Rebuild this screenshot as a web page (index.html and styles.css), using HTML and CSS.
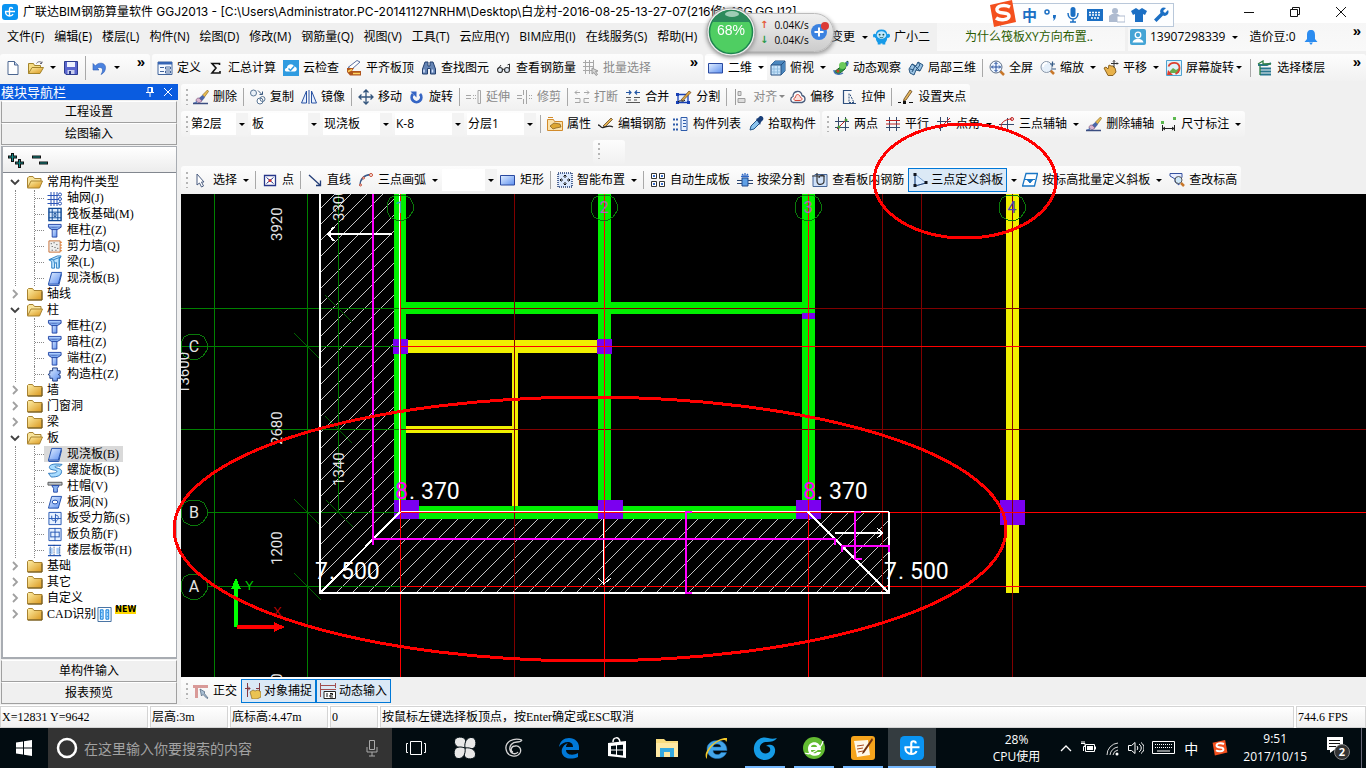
FILE: index.html
```html
<!DOCTYPE html>
<html lang="zh-CN">
<head>
<meta charset="utf-8">
<title>广联达BIM钢筋算量软件 GGJ2013</title>
<link rel="stylesheet" href="styles.css">
</head>
<body>
<svg class="defs" aria-hidden="true">
<defs>
<linearGradient id="gBlue" x1="0" y1="0" x2="1" y2="1"><stop offset="0" stop-color="#e4f0ff"/><stop offset="1" stop-color="#5c8ff0"/></linearGradient>
<linearGradient id="gFold" x1="0" y1="0" x2="1" y2="1"><stop offset="0" stop-color="#fff0a8"/><stop offset="1" stop-color="#d9961c"/></linearGradient>
<pattern id="hatch" width="16" height="16" patternUnits="userSpaceOnUse" patternTransform="translate(1 0)"><path d="M-1 17L17-1" stroke="#c4c4c4" fill="none"/></pattern>
</defs>
<symbol id="logo" viewBox="0 0 16 16"><rect width="16" height="16" rx="3" fill="#0a94f2"/><path d="M10.500 5C10.500 3 7.500 3 7.500 5v7M3 7.500h10M3.500 7.500c0 3 2 4.500 4 4.500 1.500 0 3-.5 3.500-2" fill="none" stroke="#fff" stroke-width="1.400"/></symbol>
<symbol id="new" viewBox="0 0 16 16"><path d="M3 1.500h6.500l3.500 3.500v9.500H3z" fill="#fff" stroke="#4c6690"/><path d="M9.500 1.500V5H13" fill="#c7d7ef" stroke="#4c6690"/></symbol>
<symbol id="open" viewBox="0 0 16 16"><path d="M.5 13.500v-10h5l1 2h6v2.500" fill="#f6dc83" stroke="#a4842b"/><path d="M.5 13.500L4 7.500h11.500l-3.500 6z" fill="url(#gFold)" stroke="#a4842b"/><path d="M8.500 3.500c1-2 4-2.500 5.500-.5V1.500M14 3.500h-2" fill="none" stroke="#667"/></symbol>
<symbol id="save" viewBox="0 0 16 16"><path d="M1.500 1.500h13v13H3l-1.500-1.500z" fill="#5a66cf" stroke="#2d3c8f"/><path d="M4 2h8v5H4z" fill="#eef2ff"/><path d="M4.500 10h7v4h-7z" fill="#c9cfee"/><path d="M6 11h2v3H6z" fill="#2d3c8f"/></symbol>
<symbol id="undo" viewBox="0 0 16 16"><path d="M3.500 6c2-4 10-4 10 1.500 0 3.500-2 6-4.500 7 2-3 2.500-7-1-7-1.500 0-2 .5-2.500 1L7 10H1V3.500z" fill="#4a82e0" stroke="#2c5ab4" stroke-width=".6"/></symbol>
<symbol id="define" viewBox="0 0 16 16"><path d="M1 2h14v12.500H1z" fill="#f5f9ff" stroke="#41649c"/><path d="M1 2h14v2.500H1z" fill="#3564b4"/><path d="M3 7.500h4M3 11.500h4M8.500 7h5v2h-5zM8.500 11h5v2h-5z" stroke="#41649c" fill="#fff"/></symbol>
<symbol id="sigma" viewBox="0 0 16 16"><path d="M11.500 5V3.500H4l4 4.500-4 5h8V11" fill="none" stroke="#111" stroke-width="1.600"/></symbol>
<symbol id="cloud" viewBox="0 0 16 16"><rect width="16" height="16" fill="#2f9be0"/><path d="M3 11.500c-2-1-1-3.500 1-3.500 0-4 6-5 7-1.500 3 0 4 4 1 5z" fill="#fff"/><path d="M5.500 8.500l2 2 3.500-4" stroke="#2f9be0" fill="none" stroke-width="1.500"/></symbol>
<symbol id="flat" viewBox="0 0 16 16"><path d="M2 7.500L11 .5l3 1.500-8 7z" fill="#fff" stroke="#5a6fa0"/><path d="M1 8h7l-2 3h9v4.500H4L1 12z" fill="#b0551d"/><path d="M2 11.500l4-2M7 13.500h7" stroke="#ffd35e" stroke-width="1.500"/></symbol>
<symbol id="bino" viewBox="0 0 16 16"><path d="M4 2h3v4h2V2h3l2.500 7v5h-5V8.500h-3V14h-5V9z" fill="#6584b4" stroke="#24406f"/><path d="M3 9.500v3M11.500 9.500v3" stroke="#d6e4ff" stroke-width="1.500"/></symbol>
<symbol id="glasses" viewBox="0 0 16 16"><circle cx="4" cy="10" r="2.500" fill="#dce6f2" stroke="#333" stroke-width="1.200"/><circle cx="11" cy="10" r="2.500" fill="#dce6f2" stroke="#333" stroke-width="1.200"/><path d="M6.500 10c.5-1 1.500-1 2 0M2 9l3-4M13.500 9V4l-2 1" stroke="#333" fill="none"/></symbol>
<symbol id="batch" viewBox="0 0 16 16"><path d="M0 2.500h11M0 6.500h11M0 10.500h9M2.500 0v14M6.500 0v14M10.500 0v9" stroke="#a8a8a8"/><path d="M9 8l6 3-2.500.5 2 3-1.500 1-2-3-2 1.500z" fill="#d5d5d5" stroke="#999"/></symbol>
<symbol id="rect" viewBox="0 0 16 16"><path d="M.5 3.500h14v9.500H.5z" fill="url(#gBlue)" stroke="#2949a0"/></symbol>
<symbol id="cube" viewBox="0 0 16 16"><path d="M1 5l4-4h10v10l-4 4H1z" fill="#c8e4fb" stroke="#254f80"/><path d="M1 5l4-4h10l-4 4zM11 5l4-4v10l-4 4z" fill="#4a86bd"/><path d="M1 5h10v10M11 5l4-4" fill="none" stroke="#254f80"/><path d="M4 6v8M7.500 6v8M2 9h8M2 12h8" stroke="#92bddf"/></symbol>
<symbol id="orbit" viewBox="0 0 16 16"><path d="M1 12L10 5l5-4-3 8-6 5z" fill="#2f9c40" stroke="#195e2a"/><path d="M1 10c0 5 6 5 9 3M13 2l2 1-1 3" fill="none" stroke="#4776b6" stroke-width="1.500"/><circle cx="9.500" cy="5.500" r="3.500" fill="#6cca5c"/><circle cx="5" cy="11" r="1.500" fill="#d23c28"/></symbol>
<symbol id="part3d" viewBox="0 0 16 16"><path d="M1 9l3-5 4 2 2-4 5 3-3 6-4-1-2 5-4-2z" fill="#9cc4e4" stroke="#285680"/><path d="M4 4l3 2-3 6M10 2l2 3-4 5M7 6l5 5M2 9l4 1" fill="none" stroke="#285680"/></symbol>
<symbol id="full" viewBox="0 0 16 16"><path d="M11 11l4 4" stroke="#c8772a" stroke-width="2.500"/><circle cx="7" cy="7" r="6" fill="#edf5ff" stroke="#5f7088"/><path d="M7 2.500v9M2.500 7h9M5.500 4L7 2.500 8.500 4M5.500 10L7 11.500 8.500 10M4 5.500L2.500 7 4 8.500M10 5.500L11.500 7 10 8.500" fill="none" stroke="#244f9e"/></symbol>
<symbol id="zoom" viewBox="0 0 16 16"><path d="M10 10l4 4" stroke="#c8772a" stroke-width="2.500"/><circle cx="6.500" cy="7" r="5.500" fill="#e6f0fa" stroke="#8a97a8"/><path d="M3 7a4 4 0 0 1 4-4" stroke="#fff" fill="none" stroke-width="2"/><path d="M10 4h5M12.500 1.500v5M12 9h4" stroke="#355b87" stroke-width="1.200"/></symbol>
<symbol id="pan" viewBox="0 0 16 16"><path d="M1 8l2-1 2 2 1-4 2 1 2 0 2 2 1 4-3 3.500H5z" fill="#e8b24b" stroke="#8c6422"/><path d="M11 .5v7M8 3.500h7M10 1.500l1-1 1 1M14 2.500l1 1-1 1" stroke="#333" fill="none"/></symbol>
<symbol id="rotscr" viewBox="0 0 16 16"><path d="M.5.5h15v15H.5z" fill="#def2fb" stroke="#4ea2d0"/><path d="M4 11l3-3 3 2 3-2v5H4z" fill="#69ad4c"/><path d="M2.500 6.500c2-5 11-5 11 1.500 0 3-2 5-4 6" fill="none" stroke="#dd402f" stroke-width="1.800"/><path d="M1 15h6L2 10z" fill="#dd402f"/></symbol>
<symbol id="floor" viewBox="0 0 16 16"><path d="M1 5h9l4-2M3 8.500h11M3 11.500h11M3 14.500h11" stroke="#28768f" stroke-width="1.800"/><path d="M1 4l5-3v3h8M3 5v10" stroke="#2d7f43" fill="none" stroke-width="1.300"/></symbol>
<symbol id="erase" viewBox="0 0 16 16"><path d="M14.500 1l-5 5 2 2 4-5.500z" fill="#e9bd50" stroke="#7a5b18" stroke-width=".6"/><path d="M9.500 6L6 9l3 3 3-3.500z" fill="#4b66a8"/><path d="M6 9c-2 0-3 1-3 3l3 2 3-2z" fill="#d7b4cf" stroke="#71446f" stroke-width=".6"/><path d="M0 14.500h15" stroke="#3a4d80" stroke-width="1.500"/><path d="M0 14l4-2v2z" fill="#5b79b5"/></symbol>
<symbol id="copy" viewBox="0 0 16 16"><circle cx="3.500" cy="4" r="3" fill="#eaf1f8" stroke="#5b7796"/><circle cx="10" cy="12" r="3" fill="#fff" stroke="#5b7796"/><circle cx="12.500" cy="10" r="2.500" fill="none" stroke="#5b7796"/><path d="M8 1.500l4 4M12.500 2.500v3H9.500" stroke="#3b5a80" fill="none"/></symbol>
<symbol id="mirror" viewBox="0 0 16 16"><path d="M5.500 2v12H.5zM10.500 2v12h5z" fill="#e6efff" stroke="#2a53a2"/><path d="M8 1v14" stroke="#2a53a2"/></symbol>
<symbol id="move" viewBox="0 0 16 16"><path d="M8 1v14M1 8h14M5.500 3.500L8 1l2.500 2.500M5.500 12.500L8 15l2.500-2.500M3.500 5.500L1 8l2.500 2.500M12.500 5.500L15 8l-2.500 2.500" stroke="#34557c" fill="none" stroke-width="1.300"/></symbol>
<symbol id="rotate" viewBox="0 0 16 16"><path d="M4 5a4.800 4.800 0 1 0 7 0" fill="none" stroke="#3565c4" stroke-width="2.800"/><path d="M1.500 2.500h6v6z" fill="#3565c4"/></symbol>
<symbol id="extend" viewBox="0 0 16 16"><path d="M0 6.500h5M0 9.500h5M7 6.500h1M9 6.500h1M7 9.500h1M9 9.500h1M12 1.500h2.500v13H12z" stroke="#a6a6a6" fill="none"/></symbol>
<symbol id="trim" viewBox="0 0 16 16"><path d="M0 6.500h5M0 9.500h5M12 6.500h1M14 6.500h1M12 9.500h1M14 9.500h1M6.500 1v5M9.500 1v14M6.500 10v5" stroke="#a6a6a6" fill="none"/></symbol>
<symbol id="break" viewBox="0 0 16 16"><path d="M1 3.500h5M3 1.500l-2 2 2 2M10 3.500h5M13 1.500l2 2-2 2M1 9.500h5v4H1M15 9.500h-5v4h5" stroke="#a6a6a6" fill="none"/></symbol>
<symbol id="merge" viewBox="0 0 16 16"><path d="M1 3.500h5M4 1.500l2 2-2 2M10 3.500h5M12 1.500l-2 2 2 2" stroke="#2558a5" stroke-width="1.200" fill="none"/><path d="M1 8.500h5M9 8.500h6M1 13.500h14M3 11h3M9 11h3" stroke="#555"/></symbol>
<symbol id="split" viewBox="0 0 16 16"><path d="M2 5.500h10v8H2z" fill="#e7f1ff" stroke="#1740b5" stroke-width="1.300"/><path d="M0 4h3v3H0zM0 12h3v3H0zM11 12h3v3h-3z" fill="#1740b5"/><path d="M5 11l8-9 2 1.500L7 11.500z" fill="#dfa843" stroke="#643f16" stroke-width=".7"/><path d="M2 13c3-3 4 1 7-2" stroke="#111" fill="none"/></symbol>
<symbol id="align" viewBox="0 0 16 16"><path d="M2.500 0v16M5 2.500h3v4H5zM5 9.500h7v4H5z" fill="#ddd" stroke="#9c9c9c"/></symbol>
<symbol id="offset" viewBox="0 0 16 16"><path d="M3 13.500c-3-1-3-5 0-6 0-6 8-7 9-1 4 1 4 6 0 7z" fill="#fff" stroke="#4c5e7e" stroke-width="1.300"/><path d="M5 11.500c-2-1-1-3 .5-3 0-4 4-4 5 0 2 0 2 3 0 3z" fill="#fbe0dc" stroke="#d34b3d"/></symbol>
<symbol id="stretch" viewBox="0 0 16 16"><path d="M10 2V1.500H2.500v13H15" fill="none" stroke="#2f507e" stroke-width="1.200"/><path d="M8 4.500v9l5 0-4-8" stroke="#2f507e" stroke-dasharray="2 1" fill="none"/></symbol>
<symbol id="gripset" viewBox="0 0 16 16"><path d="M6 10l6-9 2 1.500L8 11l-2.500 1z" fill="#e5b75e" stroke="#60401a" stroke-width=".8"/><path d="M0 13.500h3M11 13.500h4" stroke="#111"/><path d="M5 12h3v3H5z" fill="#111"/></symbol>
<symbol id="prop" viewBox="0 0 16 16"><path d="M.5 3.500h6l1 2h8v9H.5z" fill="#fbe3ad" stroke="#d28b2b"/><path d="M1 1.500h5" stroke="#d28b2b"/><path d="M3 10l4-3 6 1 1 3-5 1-3 1z" fill="#dda733" stroke="#7d571a" stroke-width=".7"/></symbol>
<symbol id="editbar" viewBox="0 0 16 16"><path d="M5 10l8-8 1.500 1.500L7 11z" fill="#e3b150" stroke="#503515" stroke-width=".7"/><path d="M0 9c3 0 2 3 5 2.500 5-1 6-2.500 10-.5" stroke="#222" fill="none" stroke-width="1.300"/></symbol>
<symbol id="list" viewBox="0 0 16 16"><path d="M0 3.500h6M0 8.500h6M0 13.500h6" stroke="#2d5baa" stroke-width="2" stroke-dasharray="2 1"/><path d="M8 1.500h6v13H8z" fill="#eaf2ff" stroke="#2d5baa"/><path d="M10 4.500h3M10 7.500h3M10 10.500h3" stroke="#2d5baa"/></symbol>
<symbol id="pick" viewBox="0 0 16 16"><path d="M2 14l1-4 6-6 3 3-6 6z" fill="#8cc4ee" stroke="#205285"/><path d="M8 3l2-1 2-2c3 0 4 2 3 4l-2 2-1 3z" fill="#193f79"/></symbol>
<symbol id="axis2" viewBox="0 0 16 16"><path d="M1 5.500h14M1 11.500h14M4.500 1v14M11.500 1v14" stroke="#34496b"/><path d="M3 13L13 3" stroke="#c02222"/><circle cx="5" cy="11" r="1.500" fill="#4a9a35"/><circle cx="12" cy="4" r="1.500" fill="#4a9a35"/></symbol>
<symbol id="axisp" viewBox="0 0 16 16"><path d="M4.500 1v14M11.500 1v14M1 11.500h14" stroke="#34496b"/><path d="M1 4.500h14M1 8h14" stroke="#c02222"/></symbol>
<symbol id="axisa" viewBox="0 0 16 16"><path d="M1 5.500h14M1 11.500h6M4.500 1v14M11.500 1v6" stroke="#34496b"/><path d="M3 13L14 2" stroke="#c02222"/></symbol>
<symbol id="axis3" viewBox="0 0 16 16"><path d="M0 8.500h15M8.500 2v13" stroke="#34496b"/><path d="M3 13c-3-6 3-10 10-10" fill="none" stroke="#c02222"/><circle cx="13" cy="3" r="1.500" fill="none" stroke="#c02222"/></symbol>
<symbol id="dim" viewBox="0 0 16 16"><path d="M1.500 9v6M13.500 9v6M2 12.500h11M4 11l-2 1.500L4 14M11 11l2 1.500L11 14" stroke="#222" fill="none"/><path d="M0 5h3v3H0zM12 1h3v3h-3z" fill="#5bb84e"/></symbol>
<symbol id="cursor" viewBox="0 0 16 16"><path d="M4 2v11l2.500-2 2 4 2-1-2-4H11z" fill="#fff" stroke="#4b5d80"/></symbol>
<symbol id="point" viewBox="0 0 16 16"><path d="M2.500 3.500h11v10h-11z" fill="#fff" stroke="#26368a" stroke-width="1.300"/><path d="M4.500 5.500l7 6M11.500 5.500l-7 6" stroke="#26368a"/><circle cx="8" cy="8.500" r="1.500" fill="#d23030"/></symbol>
<symbol id="line" viewBox="0 0 16 16"><path d="M2 3l11 10M13.500 8.500V13.500H9" stroke="#243e78" stroke-width="1.300" fill="none"/></symbol>
<symbol id="arc" viewBox="0 0 16 16"><path d="M2 14C2 8 5 3 13 2.500" stroke="#3c5c8c" stroke-width="1.300" fill="none"/><g fill="#fff" stroke="#c8492f"><circle cx="2.500" cy="13" r="1"/><circle cx="5.500" cy="6" r="1"/><circle cx="13" cy="3" r="1.500"/></g></symbol>
<symbol id="smart" viewBox="0 0 16 16"><path d="M1 1h14v14H1z" fill="#dceaff" stroke="#203b71" stroke-width="1.500" stroke-dasharray="1 1"/><path d="M8 3v3M8 10v3M3 8h3M10 8h3M6.500 4.500L8 3l1.500 1.500M6.500 11.500L8 13l1.500-1.500M4.500 6.500L3 8l1.500 1.500M11.500 6.500L13 8l-1.500 1.500" stroke="#111" fill="none"/></symbol>
<symbol id="auto" viewBox="0 0 16 16"><path d="M1.500 1.500h5v5h-5zM9.500 1.500h5v5h-5zM1.500 9.500h5v5h-5zM9.500 9.500h5v5h-5z" fill="#fff" stroke="#333"/><path d="M3 3h2v2H3zM11 3h2v2h-2zM3 11h2v2H3zM11 11h2v2h-2z" fill="#3870d0"/></symbol>
<symbol id="beamcut" viewBox="0 0 16 16"><path d="M0 8.500h16M0 11.500h16" stroke="#29446f"/><path d="M5 6h6v8H5z" fill="#5fa0e6" stroke="#234b8c"/><path d="M8 1v3M5 2l1.500 1.500M11 2L9.500 3.500M4 4.500h8" stroke="#3169c5" stroke-width="1.300"/></symbol>
<symbol id="viewbar" viewBox="0 0 16 16"><path d="M3 2.500h12v12H1V4.500z" fill="#cfe1f8" stroke="#456597"/><path d="M0 4h13M5 1v8c0 5 7 4 7 0V5c0-3-5-2-5 1" fill="none" stroke="#333" stroke-width="1.200"/></symbol>
<symbol id="slope" viewBox="0 0 16 16"><path d="M3 2v12l11-3z" fill="#d6eaff" stroke="#7fa3cf"/><path d="M3 3v10M3 14l11-3" stroke="#27487b"/><path d="M1.500 1h3v3h-3zM1.500 12h3v3h-3zM12.500 9h3v3h-3z" fill="#10151f"/></symbol>
<symbol id="level" viewBox="0 0 16 16"><path d="M4 1.500h11.500l-3 12.500H.5z" fill="#fff" stroke="#1976c5" stroke-width="1.300"/><path d="M3 7.500h10M5.500 8h5L8 11z" fill="#1976c5" stroke="#1976c5"/></symbol>
<symbol id="check" viewBox="0 0 16 16"><path d="M1 1.500h12v4L10 8v5l-4-3V7L1 4z" fill="#e7edff" stroke="#3551a0"/><circle cx="9.500" cy="8" r="3.500" fill="#cfe8fa" stroke="#555"/><path d="M12 11l3 3" stroke="#c8772a" stroke-width="2.500"/></symbol>
<symbol id="ortho" viewBox="0 0 16 16"><path d="M0 2h15v3H5v10H2V5H0z" fill="#d99a98"/><path d="M7 6l5 3-1 1 4 5-1 .5-4-4-1.500 1.500z" fill="#a9bed2" stroke="#4a6078" stroke-width=".7"/></symbol>
<symbol id="snap" viewBox="0 0 16 16"><path d="M2.500 0v14M14.500 0v9M0 5.500h5M3 3.500l2 2-2 2M11 5.500h4" stroke="#843a42" fill="none"/><path d="M5 9l3-2 2 1 3-1 3 2v5l-4 2H7z" fill="#eac353" stroke="#8b6627" stroke-width=".7"/></symbol>
<symbol id="dyn" viewBox="0 0 16 16"><path d="M.5 0v14M15.500 0v5M1 2.500h14M3 6.500h13M1 6.500h2" stroke="#a14e4e"/><path d="M4 8.500h11.500v7H4z" fill="#fff" stroke="#222"/><path d="M7 10v4M10 10.500h2.500v1.500H10v2h3" fill="none" stroke="#111"/></symbol>
<symbol id="fopen" viewBox="0 0 16 14"><path d="M.5 12V2.500L2 1h4l1.500 2H14v3" fill="#f8e49b" stroke="#a88331"/><path d="M.5 12.500L4 5.500h11.500L12.500 12.500z" fill="url(#gFold)" stroke="#a88331"/></symbol>
<symbol id="fold" viewBox="0 0 16 14"><path d="M.5 12.500V2L1.500 1h4L7 3h8v9.500z" fill="url(#gFold)" stroke="#a88331"/><path d="M15 4v8.500H1" stroke="#6b5520" fill="none"/></symbol>
<symbol id="gridt" viewBox="0 0 15 15"><path d="M0 4.500h11M0 8.500h11M0 12.500h11M3.500 1v14M6.500 1v14M9.500 1v14" stroke="#2a54b6"/><g fill="#fff" stroke="#2a54b6"><circle cx="12.500" cy="3.500" r="1.500"/><circle cx="12.500" cy="8" r="1.500"/><circle cx="12.500" cy="12.500" r="1.500"/></g></symbol>
<symbol id="raft" viewBox="0 0 15 16"><path d="M1 1.500h13v13H1z" fill="#dcecff" stroke="#0d4795" stroke-width="1.500"/><path d="M4.500 2v12M10.500 2v12M1 5.500h13M1 11.500h13M6.500 7h2v3h-2z" stroke="#0d4795" fill="none"/></symbol>
<symbol id="col" viewBox="0 0 15 16"><path d="M.5 1.500h13.500v3H.5z" fill="#a9ccff" stroke="#2345a5"/><path d="M4.500 5h5v10h-5z" fill="url(#gBlue)" stroke="#2345a5"/><path d="M1 5l3 2h6l4-2.500" fill="#82aef0" stroke="#2345a5"/></symbol>
<symbol id="wall" viewBox="0 0 15 16"><path d="M1 2h12v12H1z" fill="#eee" stroke="#c87137"/><path d="M3 5h1M6 4h1M9 6h1M4 8h1M7 9h1M10 10h1M4 12h1M8 12h1" stroke="#333"/><path d="M13 3.500h2M13 6.500h2M13 9.500h2M13 12.500h2" stroke="#e27a24"/></symbol>
<symbol id="beam" viewBox="0 0 15 16"><path d="M1 5l9-4 4 0-2 4v9H9V8L7 9v5H4V7z" fill="#bce4ff" stroke="#2a7ec2"/><path d="M1 5h5l8-3M6 5l1 4M12 3v10" stroke="#2a7ec2" fill="none"/></symbol>
<symbol id="slab" viewBox="0 0 15 16"><path d="M4 1.500h10.500L11 14H.500z" fill="url(#gBlue)" stroke="#1d4caa"/><path d="M.500 14l.5 1.500h10.500l3-12" fill="none" stroke="#1d4caa"/></symbol>
<symbol id="tie" viewBox="0 0 15 16"><path d="M5 1h5v3h3v3l-2 1 2 1v3h-3v3H5v-3H2V9L0 8l2-1V4h3z" fill="url(#gBlue)" stroke="#17367d"/></symbol>
<symbol id="spiral" viewBox="0 0 15 16"><path d="M15 1.500C8 .5 1 1 1.500 5c.5 3 8 2 8 4 0 1.500-4 2-9 2l3 4c6 0 11-1.500 11-6 0-4-7-3-7-5 0-1 3-1 5.500-.5z" fill="#a8dcff" stroke="#2d78bd"/></symbol>
<symbol id="cap" viewBox="0 0 15 16"><path d="M0 3.500h15v3H0z" fill="#bcc3ca" stroke="#555"/><path d="M4 7h8l-2 3v4H6v-4z" fill="#8bb6f2" stroke="#2345a5"/></symbol>
<symbol id="hole" viewBox="0 0 15 16"><path d="M4 1.500h10.500L11 14H.500z" fill="url(#gBlue)" stroke="#1d4caa"/><ellipse cx="7.500" cy="7.500" rx="3" ry="2" fill="#fff" stroke="#1d4caa"/></symbol>
<symbol id="rebar" viewBox="0 0 15 16"><path d="M1 1.500h13v13H1z" fill="#e6f1ff" stroke="#2556b3"/><path d="M1 8h13M8 3v10M4 5v3c0 3 4 3 4 0M8 5c4-2 4 5 0 6" stroke="#2556b3" fill="none"/></symbol>
<symbol id="neg" viewBox="0 0 15 16"><path d="M1 1.500h13v13H1z" fill="#e6f1ff" stroke="#2556b3"/><path d="M3 5.500h9M3 10.500h9M3 5v6M12 5v6M7.500 1v14" stroke="#2556b3" fill="none"/></symbol>
<symbol id="strip" viewBox="0 0 15 16"><path d="M0 2.500h14M0 13.500h14" stroke="#2556b3" stroke-width="1.500"/><path d="M1 5h4v7H1zM9 5h4v7H9z" fill="#a8ccf6"/><path d="M6.500 2v12M2.500 4v9M12.500 4v9" stroke="#203d79" stroke-dasharray="1 1"/></symbol>
<symbol id="cad" viewBox="0 0 16 16"><path d="M.5.5h14v15H.5z" fill="#fff" stroke="#39679c"/><path d="M3 3h3v10H3zM9 3h3v10H9z" fill="#b0ddff" stroke="#0878d8"/><path d="M4 6h1M4 10h1M10 6h1M10 10h1" stroke="#0878d8"/></symbol>
<symbol id="down" viewBox="0 0 10 10"><path d="M1 3l4 4 4-4" fill="none" stroke="#404040" stroke-width="1.800"/></symbol>
<symbol id="right" viewBox="0 0 10 10"><path d="M3 1l4 4-4 4" fill="none" stroke="#a0a0a0" stroke-width="1.800"/></symbol>
<symbol id="sogou" viewBox="0 0 28 28"><path d="M1 5L23 0l4 22-22 5z" fill="#f4501e"/><path d="M21 7c-6-3-14-1-13 3 1 5 12 1 12 6 0 4-9 5-13 2" fill="none" stroke="#fff" stroke-width="3.500"/></symbol>
<symbol id="user" viewBox="0 0 16 16"><rect width="16" height="16" rx="2" fill="#44a4d5"/><circle cx="8" cy="6" r="2.800" fill="none" stroke="#fff" stroke-width="1.300"/><path d="M2.500 13.500c1-5 10-5 11 0z" fill="#fff"/></symbol>
<symbol id="bell" viewBox="0 0 16 16"><path d="M8 1c-3 0-4 2-4 5v4l-2.500 3h13L12 10V6c0-3-1-5-4-5zM6 13.500h4L8 16z" fill="#2b8cf0"/></symbol>
<symbol id="ghost" viewBox="0 0 18 16"><path d="M9 0c4 0 6 2 6 5 2-1 3 0 3 2s-2 2-3 2c0 2-1 4-2 5v2h-3v-1H8v1H5v-2c-1-1-2-3-2-5-1 0-3 0-3-2s1-3 3-2c0-3 2-5 6-5z" fill="#169ae8"/><ellipse cx="9" cy="6" rx="5" ry="4" fill="#bfe8ff"/><circle cx="7" cy="5.500" r="1" fill="#155"/><circle cx="11" cy="5.500" r="1" fill="#155"/><path d="M7 8c1 1 3 1 4 0" stroke="#155" fill="none"/></symbol>
</svg>

<header class="titlebar">
  <svg class="ic"><use href="#logo"/></svg>
  <h1>广联达BIM钢筋算量软件 GGJ2013 - [C:\Users\Administrator.PC-20141127NRHM\Desktop\白龙村-2016-08-25-13-27-07(216修)_16G.GGJ12]</h1>
  <div class="winbtns">
    <button aria-label="最小化"><svg viewBox="0 0 10 10"><path d="M0 5.500h10" stroke="#111"/></svg></button>
    <button aria-label="还原"><svg viewBox="0 0 10 10"><path d="M.5 2.500h7v7h-7zM2.500 2V.5h7v7H8" fill="none" stroke="#111"/></svg></button>
    <button aria-label="关闭"><svg viewBox="0 0 10 10"><path d="M0 0l10 10M10 0L0 10" stroke="#111"/></svg></button>
  </div>
</header>

<nav class="menubar">
  <button>文件(F)</button><button>编辑(E)</button><button>楼层(L)</button><button>构件(N)</button><button>绘图(D)</button><button>修改(M)</button><button>钢筋量(Q)</button><button>视图(V)</button><button>工具(T)</button><button>云应用(Y)</button><button>BIM应用(I)</button><button>在线服务(S)</button><button>帮助(H)</button>
  <div class="menuright">
    <button class="drop">变更</button>
    <button class="xiao"><svg class="ic"><use href="#ghost"/></svg>广小二</button>
    <a class="tip" href="#">为什么筏板XY方向布置..</a>
    <div class="account">
      <button class="drop"><svg class="ic"><use href="#user"/></svg>13907298339</button>
      <button>造价豆:0</button>
      <button aria-label="消息"><svg class="ic"><use href="#bell"/></svg></button>
      <span class="more">»</span>
    </div>
  </div>
</nav>

<div class="toprow">
  <div class="bar file">
    <button class="tb" aria-label="新建"><svg class="ic"><use href="#new"/></svg></button>
    <button class="tb drop" aria-label="打开"><svg class="ic"><use href="#open"/></svg></button>
    <button class="tb" aria-label="保存"><svg class="ic"><use href="#save"/></svg></button>
    <i class="sep tall"></i>
    <button class="tb drop" aria-label="撤销"><svg class="ic"><use href="#undo"/></svg></button>
    <span class="more">»</span>
  </div>
  <div class="bar calc">
    <button class="tb"><svg class="ic"><use href="#define"/></svg>定义</button>
    <button class="tb"><svg class="ic"><use href="#sigma"/></svg>汇总计算</button>
    <button class="tb"><svg class="ic"><use href="#cloud"/></svg>云检查</button>
    <button class="tb"><svg class="ic"><use href="#flat"/></svg>平齐板顶</button>
    <button class="tb"><svg class="ic"><use href="#bino"/></svg>查找图元</button>
    <button class="tb"><svg class="ic"><use href="#glasses"/></svg>查看钢筋量</button>
    <button class="tb" disabled><svg class="ic"><use href="#batch"/></svg>批量选择</button>
    <span class="more">»</span>
  </div>
  <div class="bar view">
    <button class="tb drop boxed"><svg class="ic"><use href="#rect"/></svg>二维</button>
    <button class="tb drop"><svg class="ic"><use href="#cube"/></svg>俯视</button>
    <button class="tb"><svg class="ic"><use href="#orbit"/></svg>动态观察</button>
    <button class="tb"><svg class="ic"><use href="#part3d"/></svg>局部三维</button>
    <i class="sep"></i>
    <button class="tb"><svg class="ic"><use href="#full"/></svg>全屏</button>
    <button class="tb drop"><svg class="ic"><use href="#zoom"/></svg>缩放</button>
    <button class="tb drop"><svg class="ic"><use href="#pan"/></svg>平移</button>
    <button class="tb drop tight"><svg class="ic"><use href="#rotscr"/></svg>屏幕旋转</button>
    <i class="sep"></i>
    <button class="tb"><svg class="ic"><use href="#floor"/></svg>选择楼层</button>
    <span class="more">»</span>
  </div>
</div>

<div class="work">
<aside class="side">
  <div class="sidehead"><h2>模块导航栏</h2>
    <button aria-label="固定"><svg viewBox="0 0 10 10"><path d="M3 .5h4.500v5H3zM6.500 1v4M1 5.500h8M5 6v4" fill="none" stroke="#fff"/></svg></button>
    <button aria-label="关闭面板"><svg viewBox="0 0 10 10"><path d="M1 1l8 8M9 1L1 9" stroke="#fff"/></svg></button>
  </div>
  <button class="acc">工程设置</button>
  <button class="acc">绘图输入</button>
  <div class="treebox">
    <div class="treetools">
      <button aria-label="全部展开"><svg viewBox="0 0 18 16"><path d="M0 5h9M4.500 1v9M7 11h9M11.500 7v9" stroke="#111" stroke-width="3"/><path d="M1 5h7M4.500 2v7M8 11h7M11.500 8v7" stroke="#138a88"/></svg></button>
      <button aria-label="全部折叠"><svg viewBox="0 0 18 16"><path d="M0 5h9M7 11h9" stroke="#111" stroke-width="3"/><path d="M1 5h7M8 11h7" stroke="#138a88"/></svg></button>
    </div>
    <ul class="tree">
      <li><button><svg class="ch"><use href="#down"/></svg><svg class="ic"><use href="#fopen"/></svg>常用构件类型</button>
        <ul>
          <li><button><svg class="ic"><use href="#gridt"/></svg>轴网(J)</button></li>
          <li><button><svg class="ic"><use href="#raft"/></svg>筏板基础(M)</button></li>
          <li><button><svg class="ic"><use href="#col"/></svg>框柱(Z)</button></li>
          <li><button><svg class="ic"><use href="#wall"/></svg>剪力墙(Q)</button></li>
          <li><button><svg class="ic"><use href="#beam"/></svg>梁(L)</button></li>
          <li><button><svg class="ic"><use href="#slab"/></svg>现浇板(B)</button></li>
        </ul></li>
      <li><button><svg class="ch"><use href="#right"/></svg><svg class="ic"><use href="#fold"/></svg>轴线</button></li>
      <li><button><svg class="ch"><use href="#down"/></svg><svg class="ic"><use href="#fopen"/></svg>柱</button>
        <ul>
          <li><button><svg class="ic"><use href="#col"/></svg>框柱(Z)</button></li>
          <li><button><svg class="ic"><use href="#col"/></svg>暗柱(Z)</button></li>
          <li><button><svg class="ic"><use href="#col"/></svg>端柱(Z)</button></li>
          <li><button><svg class="ic"><use href="#tie"/></svg>构造柱(Z)</button></li>
        </ul></li>
      <li><button><svg class="ch"><use href="#right"/></svg><svg class="ic"><use href="#fold"/></svg>墙</button></li>
      <li><button><svg class="ch"><use href="#right"/></svg><svg class="ic"><use href="#fold"/></svg>门窗洞</button></li>
      <li><button><svg class="ch"><use href="#right"/></svg><svg class="ic"><use href="#fold"/></svg>梁</button></li>
      <li><button><svg class="ch"><use href="#down"/></svg><svg class="ic"><use href="#fopen"/></svg>板</button>
        <ul>
          <li><button class="sel"><svg class="ic"><use href="#slab"/></svg>现浇板(B)</button></li>
          <li><button><svg class="ic"><use href="#spiral"/></svg>螺旋板(B)</button></li>
          <li><button><svg class="ic"><use href="#cap"/></svg>柱帽(V)</button></li>
          <li><button><svg class="ic"><use href="#hole"/></svg>板洞(N)</button></li>
          <li><button><svg class="ic"><use href="#rebar"/></svg>板受力筋(S)</button></li>
          <li><button><svg class="ic"><use href="#neg"/></svg>板负筋(F)</button></li>
          <li><button><svg class="ic"><use href="#strip"/></svg>楼层板带(H)</button></li>
        </ul></li>
      <li><button><svg class="ch"><use href="#right"/></svg><svg class="ic"><use href="#fold"/></svg>基础</button></li>
      <li><button><svg class="ch"><use href="#right"/></svg><svg class="ic"><use href="#fold"/></svg>其它</button></li>
      <li><button><svg class="ch"><use href="#right"/></svg><svg class="ic"><use href="#fold"/></svg>自定义</button></li>
      <li><button><svg class="ch"><use href="#right"/></svg><svg class="ic"><use href="#fold"/></svg>CAD识别<svg class="ic cad"><use href="#cad"/></svg><b class="newtag">NEW</b></button></li>
    </ul>
  </div>
  <button class="acc">单构件输入</button>
  <button class="acc">报表预览</button>
</aside>

<main class="main">
  <div class="row r1"><div class="bar"><i class="grip"></i>
    <button class="tb"><svg class="ic"><use href="#erase"/></svg>删除</button>
    <i class="sep"></i>
    <button class="tb"><svg class="ic"><use href="#copy"/></svg>复制</button>
    <button class="tb"><svg class="ic"><use href="#mirror"/></svg>镜像</button>
    <i class="sep"></i>
    <button class="tb"><svg class="ic"><use href="#move"/></svg>移动</button>
    <button class="tb"><svg class="ic"><use href="#rotate"/></svg>旋转</button>
    <i class="sep"></i>
    <button class="tb" disabled><svg class="ic"><use href="#extend"/></svg>延伸</button>
    <button class="tb" disabled><svg class="ic"><use href="#trim"/></svg>修剪</button>
    <i class="sep"></i>
    <button class="tb" disabled><svg class="ic"><use href="#break"/></svg>打断</button>
    <button class="tb"><svg class="ic"><use href="#merge"/></svg>合并</button>
    <button class="tb"><svg class="ic"><use href="#split"/></svg>分割</button>
    <i class="sep"></i>
    <button class="tb drop tight" disabled><svg class="ic"><use href="#align"/></svg>对齐</button>
    <button class="tb"><svg class="ic"><use href="#offset"/></svg>偏移</button>
    <button class="tb"><svg class="ic"><use href="#stretch"/></svg>拉伸</button>
    <i class="sep"></i>
    <button class="tb"><svg class="ic"><use href="#gripset"/></svg>设置夹点</button>
  </div></div>

  <div class="row r2"><div class="bar"><i class="grip"></i>
    <select class="combo first" aria-label="楼层"><option>第2层</option></select>
    <select class="combo" aria-label="构件类型"><option>板</option></select>
    <select class="combo" aria-label="构件"><option>现浇板</option></select>
    <select class="combo" aria-label="名称"><option>K-8</option></select>
    <select class="combo" aria-label="分层"><option>分层1</option></select>
    <i class="sep"></i>
    <button class="tb"><svg class="ic"><use href="#prop"/></svg>属性</button>
    <button class="tb"><svg class="ic"><use href="#editbar"/></svg>编辑钢筋</button>
    <button class="tb"><svg class="ic"><use href="#list"/></svg>构件列表</button>
    <button class="tb"><svg class="ic"><use href="#pick"/></svg>拾取构件</button>
  </div><div class="bar"><i class="grip"></i>
    <button class="tb"><svg class="ic"><use href="#axis2"/></svg>两点</button>
    <button class="tb"><svg class="ic"><use href="#axisp"/></svg>平行</button>
    <button class="tb drop"><svg class="ic"><use href="#axisa"/></svg>点角</button>
    <button class="tb drop"><svg class="ic"><use href="#axis3"/></svg>三点辅轴</button>
    <button class="tb"><svg class="ic"><use href="#erase"/></svg>删除辅轴</button>
    <button class="tb drop"><svg class="ic"><use href="#dim"/></svg>尺寸标注</button>
  </div></div>

  <div class="row r3"><div class="bar stub"><i class="grip"></i></div></div>

  <div class="row r4"><div class="bar"><i class="grip"></i>
    <button class="tb drop"><svg class="ic"><use href="#cursor"/></svg>选择</button>
    <i class="sep"></i>
    <button class="tb"><svg class="ic"><use href="#point"/></svg>点</button>
    <i class="sep"></i>
    <button class="tb"><svg class="ic"><use href="#line"/></svg>直线</button>
    <button class="tb drop"><svg class="ic"><use href="#arc"/></svg>三点画弧</button>
    <select class="combo small" aria-label="画弧参数"><option></option></select>
    <button class="tb"><svg class="ic"><use href="#rect"/></svg>矩形</button>
    <i class="sep"></i>
    <button class="tb drop"><svg class="ic"><use href="#smart"/></svg>智能布置</button>
    <i class="sep"></i>
    <button class="tb"><svg class="ic"><use href="#auto"/></svg>自动生成板</button>
    <button class="tb"><svg class="ic"><use href="#beamcut"/></svg>按梁分割</button>
    <button class="tb"><svg class="ic"><use href="#viewbar"/></svg>查看板内钢筋</button>
    <button class="tb on"><svg class="ic"><use href="#slope"/></svg>三点定义斜板</button>
    <button class="tb drop lone" aria-label="更多斜板命令"></button>
    <button class="tb drop"><svg class="ic"><use href="#level"/></svg>按标高批量定义斜板</button>
    <button class="tb"><svg class="ic"><use href="#check"/></svg>查改标高</button>
  </div></div>

  <svg class="canvas" role="img" aria-label="绘图区">
    <g transform="translate(-181 -194)" shape-rendering="crispEdges" fill="none">
      <path d="M320 194H400V512H889V593H320z" fill="url(#hatch)"/>
      <path d="M394 194h12v316h-12zM598 194h13v316h-13zM802 194h13v316h-13zM406 302h396v12H406zM419 506h378v13H419z" fill="#00f000"/>
      <path d="M408 340h190v13H408zM512 353h6v153h-6zM406 426h106v7H406zM1006 194h13v399h-13z" fill="#f0f000"/>
      <path d="M393 339h15v15h-15zM597 339h15v15h-15zM394 500h25v19h-25zM598 500h25v19h-25zM796 500h25v19h-25zM1000 500h25v25h-25zM802 313h13v6h-13z" fill="#7b00f0"/>
      <path d="M214.500 194V677M307.500 194V677M338.500 194V512M181 308.500H400M181 346.500H400M181 429.500H400M207 512.500H400M207 586.500H400" stroke="#008000"/>
      <path d="M294 333l27 27M325 295l27 27M325 416l27 27M294 499l27 27M326 500l27 27M294 573l27 27" stroke="#006400"/>
      <path d="M400 308.500H2400M400 429.500H2400M514.500 194V677M882.500 194V677M921.500 194V677M1012.500 194V677" stroke="#800000"/>
      <path d="M399.500 194V512M400 511.500H889M603.500 519v66" stroke="#fff"/>
      <path d="M400.500 194V677M604.500 194V677M808.500 194V677M400 346.500H2400M400 512.500H2400M400 586.500H2400" stroke="#f00"/>
      <path d="M320 194V593H889V512M392 234H328M334 227l-6 7 6 7M835 533H883" stroke="#fff" stroke-width="2"/>
      <path d="M400 512L320 593M808 512L889 593" stroke="#fff" stroke-width="2"/>
      <path d="M598 578l6 6 7-6M877 528l6 5-6 5" stroke="#fff"/>
      <path d="M373 194V545M373 539H835V545M692 512H686V593H692M861 512H855V559H862M842 552V546H889V552" stroke="#f0f" stroke-width="2"/>
      <g stroke="#0a7a0a">
        <path id="oct" d="M190 334h8l6 3 3 6v7l-4 6-5 3h-8l-6-3-3-6v-7l3-6z"/>
        <use href="#oct" y="166"/><use href="#oct" y="240"/><use href="#oct" x="206" y="-139"/><use href="#oct" x="410" y="-139"/><use href="#oct" x="614" y="-139"/><use href="#oct" x="818" y="-139"/>
      </g>
      <path d="M234 627V589h-3l5-11 5 11h-3v38z" fill="#0f0"/><path d="M237 625h37v-3l11 5-11 5v-3H237z" fill="#f00"/>
    </g>
    <g transform="translate(-181 -194)" class="cadtext">
      <text x="194" y="352" class="mid">C</text><text x="194" y="518" class="mid">B</text><text x="194" y="592" class="mid">A</text>
      <text x="400" y="213" class="mid one">1</text><text x="604" y="213" class="mid two">2</text><text x="808" y="213" class="mid two">3</text><text x="1012" y="213" class="mid four">4</text>
      <text x="395" y="499" class="big"><tspan class="mag">8</tspan><tspan x="409">.</tspan><tspan x="421">370</tspan></text>
      <text x="803" y="499" class="big"><tspan class="mag">8</tspan><tspan x="817">.</tspan><tspan x="829">370</tspan></text>
      <text x="315" y="579" class="big">7<tspan x="329">.</tspan><tspan x="341">500</tspan></text>
      <text x="884" y="579" class="big">7<tspan x="898">.</tspan><tspan x="910">500</tspan></text>
      <text transform="translate(282 241) rotate(-90)">3920</text><text transform="translate(282 445) rotate(-90)">2680</text><text transform="translate(282 565) rotate(-90)">1200</text>
      <text transform="translate(282 707) rotate(-90)">3300</text>
      <text transform="translate(344 221) rotate(-90)">3300</text><text transform="translate(344 486) rotate(-90)">1340</text><text transform="translate(189 394) rotate(-90)">13600</text>
      <text x="245" y="590" class="ucs gy">Y</text><text x="273" y="616" class="ucs rx">X</text>
    </g>
  </svg>

  <div class="row r5"><div class="bar"><i class="grip"></i>
    <button class="tb"><svg class="ic"><use href="#ortho"/></svg>正交</button>
    <button class="tb on"><svg class="ic"><use href="#snap"/></svg>对象捕捉</button>
    <button class="tb on"><svg class="ic"><use href="#dyn"/></svg>动态输入</button>
  </div></div>
</main>
</div>

<footer class="status">
  <span class="s1">X=12831 Y=9642</span><span class="s2">层高:3m</span><span class="s3">底标高:4.47m</span><span class="s4">0</span><span class="s5">按鼠标左键选择板顶点，按Enter确定或ESC取消</span><span class="s6">744.6 FPS</span>
</footer>

<div class="taskbar">
  <button class="start" aria-label="开始"><svg viewBox="0 0 16 16"><path d="M0 2.500L7 1.500V7.500H0zM8 1.300L16 0v7.500H8zM0 8.500h7v6L0 13.500zM8 8.500h8V16l-8-1.300z" fill="#fff"/></svg></button>
  <div class="search"><svg class="cort" viewBox="0 0 22 22"><circle cx="11" cy="11" r="9" fill="none" stroke="#fff" stroke-width="2.500"/></svg><input type="text" aria-label="搜索" placeholder="在这里输入你要搜索的内容"><svg class="mic" viewBox="0 0 12 18"><path d="M3.500 1.500h5v9h-5zM1 8v5h10V8M6 13v4M3 17h6" fill="none" stroke="#aaa"/></svg></div>
  <div class="apps">
    <button class="tv" aria-label="任务视图"><svg viewBox="0 0 24 24"><path d="M6.500 5.500h11v13h-11zM4 7.500H2.500v9H4M20 7.500h1.500v9H20" fill="none" stroke="#fff"/></svg></button>
    <button aria-label="应用"><svg viewBox="0 0 24 24"><g fill="#e8e8e8" stroke="#000c12"><path id="petal" d="M12 12C6 13 1 10 1.500 5 2 0 11 0 12.500 4c1 3 .5 5-.5 8z"/><use href="#petal" transform="rotate(90 12 12)"/><use href="#petal" transform="rotate(180 12 12)"/><use href="#petal" transform="rotate(270 12 12)"/></g></svg></button>
    <button aria-label="浏览工具"><svg viewBox="0 0 24 24"><path d="M20 4C11 1 3 6 4 13c1 8 11 9 14 4 2-4-1-8-5-7-4 0-5 5-2 6M20 4c-1 2-3 2-5 2-5 0-8 4-7 8 1 4 6 5 8 2" fill="none" stroke="#d5d5d5" stroke-width="1.300"/></svg></button>
    <button class="gap" aria-label="Edge"><svg viewBox="0 0 24 24"><path d="M2 11C3 5 7 2 12 2c6 0 10 4 10 9v3H9c0 5 7 6 12 3v4C12 25 3 21 5 13c1-3 3-5 6-6-1 1-2 2-2 4h7c0-7-10-6-14 0z" fill="#0078d7"/></svg></button>
    <button aria-label="应用商店"><svg viewBox="0 0 24 24"><path d="M2 7l18-2v17L2 20z" fill="#fff"/><path d="M7 6c0-5 6-6 7 0" stroke="#fff" fill="none" stroke-width="1.500"/><path d="M5 10l5-.5v4H5zM11 9.300l6-.5v4.700h-6zM5 14.500h5v4l-5-.5zM11 14.500h6v5l-6-.7z" fill="#000c12"/></svg></button>
    <button aria-label="文件资源管理器"><svg viewBox="0 0 24 24"><path d="M1 3h8l2 2h12v16H1z" fill="#f9dc7f"/><path d="M1 7h22v14H1z" fill="#ffe9a4"/><path d="M5 12h14v9h-4v-5H9v5H5z" fill="#35a9e0"/></svg></button>
    <button aria-label="Internet Explorer"><svg viewBox="0 0 24 24"><path d="M23 14.500H9c0 5 7 5 8 2h5.500C19 26 3 24 3 13 3 2 23 1 23 14.500zM9 11h8c0-4-8-4-8 0z" fill="#43a6ea" stroke="#1c6fb4" stroke-width=".5"/><path d="M3 23C-3 17 12 1 23 2c0 2 0 3-1 4 0-2-1-2-3-2C11 5 2 15 3 23z" fill="#f3c92c"/></svg></button>
    <button class="run" aria-label="安全工具"><svg viewBox="0 0 24 24"><path d="M24 2c-2 3-6 4-10 4-5 0-8 3-7 7 1 5 8 6 10 2 1-3-1-5-4-5 3-2 8-2 9 3 1 6-4 11-10 11C4 24 0 18 1 11 2 4 9 0 15 2c3 1 6 1 9 0z" fill="#159be5"/></svg></button>
    <button class="run" aria-label="浏览器"><svg viewBox="0 0 24 24"><circle cx="12" cy="12" r="11" fill="#63bb32"/><path d="M19 14H9c0 4 5 4 6 2h4c-2 6-13 5-13-3 0-9 13-9 13 1zM9 11h6c0-3-6-3-6 0z" fill="#fff"/><path d="M3 17C9 20 20 12 21 5" stroke="#fff" fill="none" stroke-width="1.300"/></svg></button>
    <button class="run" aria-label="编辑器"><svg viewBox="0 0 24 24"><rect width="24" height="24" rx="3" fill="#f6a41c"/><path d="M3 5l14-1 2 15-13 2z" fill="#fff8e8"/><path d="M6 10l7-1M6 13l6-1M7 16l5-1" stroke="#aa4b21"/><path d="M21 2l1 2-9 13-2 1 1-3z" fill="#713210"/></svg></button>
    <button class="run cur" aria-label="GGJ2013"><svg viewBox="0 0 16 16"><use href="#logo"/></svg></button>
  </div>
  <div class="tray">
    <div class="cpu">28%<br>CPU使用</div>
    <svg class="chev" viewBox="0 0 12 12"><path d="M1 9l5-5 5 5" stroke="#fff" fill="none" stroke-width="1.300"/></svg>
    <svg class="t16" viewBox="0 0 16 16"><path d="M5.500 4.500h9v7h-9zM1 3.500h4v3H3.500V11M2 1v2M4 1v2" stroke="#fff" fill="none"/><path d="M7 6h6v4H7zM15 6.500h1v3h-1z" fill="#fff"/></svg>
    <svg class="t16" viewBox="0 0 16 16"><path d="M3 15A12 12 0 0 1 14 3M6 15a9 9 0 0 1 8-8M9 15a6 6 0 0 1 5-5" stroke="#ddd" fill="none"/><circle cx="13" cy="14" r="1.500" fill="#fff"/></svg>
    <svg class="t16" viewBox="0 0 16 16"><path d="M.5 5.500h3L7 2.500v11L3.500 10.500h-3zM9 6c1 1 1 3 0 4M11 4c3 2 3 6 0 8M13 2.500c4 3 4 8 0 11" stroke="#fff" fill="none"/></svg>
    <svg class="kbd" viewBox="0 0 24 14"><path d="M.5.5h22v12H.5z" stroke="#fff" fill="none"/><path d="M3 3.500h18M3 6.500h18" stroke="#fff" stroke-dasharray="1 1"/><path d="M5 10h13" stroke="#fff"/></svg>
    <span class="ime">中</span>
    <svg class="sg" viewBox="0 0 28 28"><use href="#sogou"/></svg>
    <div class="clock">9:51<br>2017/10/15</div>
    <button class="note" aria-label="通知"><svg viewBox="0 0 24 24"><path d="M1 1h16v13H8l-4 3v-3H1z" fill="#fff"/><path d="M3 4.500h11M3 7.500h11M3 10.500h7" stroke="#111"/><circle cx="16" cy="16" r="7.500" fill="#333" stroke="#888"/><text x="16" y="20" text-anchor="middle" fill="#fff">2</text></svg></button>
  </div>
</div>

<svg class="marks" aria-hidden="true"><g fill="none" stroke="#f00" stroke-width="3" shape-rendering="crispEdges"><ellipse cx="965" cy="181" rx="91" ry="57"/><ellipse cx="590" cy="529" rx="416" ry="132"/></g></svg>

<div class="speed">
  <svg class="ball" viewBox="0 0 50 50"><circle cx="25" cy="25" r="24" fill="#eee" stroke="#aaa"/><circle cx="25" cy="25" r="21.500" fill="#4fce62" stroke="#1d8550" stroke-width="1.500"/><path d="M6 15a21 21 0 0 1 38 0z" fill="#2c8a5b"/><ellipse cx="26" cy="7" rx="7" ry="3" fill="#cfe9dc" opacity=".7"/><text x="25" y="28" text-anchor="middle" fill="#fff">68%</text></svg>
  <div class="pill"><span><i class="up">↑</i>0.04K/s</span><span><i class="dn">↓</i>0.04K/s</span></div>
  <svg class="plus" viewBox="0 0 20 20"><circle cx="9" cy="11" r="8" fill="#3b82e0"/><path d="M9 6.500v9M4.500 11h9" stroke="#fff" stroke-width="2"/><circle cx="15" cy="5" r="4" fill="#dc3a35"/></svg>
</div>

<div class="imebar">
  <svg class="slogo" viewBox="0 0 28 28"><use href="#sogou"/></svg>
  <span>中</span>
  <svg viewBox="0 0 16 16"><circle cx="4" cy="5" r="2" fill="none" stroke="#1b6fc4" stroke-width="1.500"/><path d="M10 8h3c0 3-1 5-3 6 1-2 1-3 0-3z" fill="#1b6fc4"/></svg>
  <svg viewBox="0 0 16 16"><rect x="5.500" y="0" width="5" height="10" rx="2.500" fill="#1b6fc4"/><path d="M3 6c0 8 10 8 10 0M8 12v3M5 15h6" stroke="#1b6fc4" fill="none" stroke-width="1.500"/></svg>
  <svg viewBox="0 0 16 16"><path d="M0 2h16v12H0z" fill="#1b6fc4"/><path d="M2 5.500h12M2 8h12M4 11h8" stroke="#fff" stroke-dasharray="2 1" stroke-width="1.300"/></svg>
  <svg viewBox="0 0 16 16"><circle cx="6" cy="4" r="3" fill="#aebbd0"/><path d="M0 15V9l3-2h6l2 2v6z" fill="#aebbd0"/><path d="M8 9h8v6H8z" fill="#fff" stroke="#aebbd0"/></svg>
  <svg viewBox="0 0 16 16"><path d="M5 1l3 2 3-2 5 3-2 4-2-1v8H4V7L2 8 0 4z" fill="#1b6fc4"/></svg>
  <svg viewBox="0 0 16 16"><path d="M15 3l-3 3-2-2 3-3C9-1 6 3 7.500 6L1 12.500 3.500 15 10 8.500c3 1.500 7-1.500 5-5.500z" fill="#1b6fc4"/></svg>
</div>
</body>
</html>
```
FILE: styles.css
```css
* { box-sizing: border-box; }
body {
  margin: 0;
  position: relative;
  min-height: 100vh;
  display: flex;
  flex-direction: column;
  background: #f0f0f0;
  color: #000;
  font: 12px/16px "Open Sans", "Noto Sans CJK SC", sans-serif;
  overflow-x: hidden;
}
button {
  font: inherit;
  color: inherit;
  border: 0;
  background: none;
  padding: 0;
  display: flex;
  align-items: center;
  white-space: nowrap;
}
h1, h2 { margin: 0; font-size: 12px; font-weight: 400; white-space: nowrap; }
h1 { font-family: "Inter", "Noto Sans CJK SC", sans-serif; }
ul { list-style: none; margin: 0; padding: 0; }
svg { display: block; flex: none; }
.defs { position: absolute; width: 0; height: 0; }
.ic { width: 16px; height: 16px; }

.titlebar {
  display: flex;
  align-items: center;
  height: 23px;
  padding: 0 2px;
  gap: 5px;
  background: #fff;
}
.winbtns { display: flex; margin-left: auto; }
.winbtns button { width: 46px; height: 20px; justify-content: center; }
.winbtns svg { width: 10px; height: 10px; }

.menubar { display: flex; height: 31px; padding: 0 0 3px 7px; gap: 10px; align-items: center; }
.menuright { display: flex; margin-left: auto; align-items: center; }
.xiao { gap: 4px; margin-right: 7px; }
.xiao .ic { width: 17px; }
.tip, .account { background: linear-gradient(#f6f6f6, #f9f9f9); height: 28px; display: flex; align-items: center; }
.tip { width: 188px; padding-right: 4px; justify-content: center; color: #2a5c00; text-decoration: none; margin-right: 3px; }
.account { width: 238px; padding-left: 2px; gap: 7px; }
.account button { gap: 4px; }
.more { font: bold 15px/12px "Liberation Sans", sans-serif; align-self: flex-start; margin: 0 5px 0 auto; padding-top: 2px; }

.drop::after {
  content: "";
  width: 0;
  border: 3px solid transparent;
  border-top-color: #000;
  border-bottom: 0;
  margin: 0 -1px 0 7px;
}
.drop:disabled::after { border-top-color: #888; }
.account .drop::after { margin: 0 4px 0 3px; }
.menuright > .drop { margin-right: 6px; }

.toprow { display: flex; height: 27px; gap: 2px; margin-bottom: 3px; }
.bar { display: flex; align-items: center; height: 100%; background: linear-gradient(#fdfdfd, #f1f1f1); border-radius: 3px; }
.file { width: 150px; padding-left: 2px; }
.calc { width: 551px; padding-left: 2px; }
.view { flex: 1; }
.tb { height: 24px; gap: 4px; padding: 0 4px 0 3px; flex: none; }
.tb:disabled { color: #8a8a8a; }
.tb.drop::after { margin-left: 2px; margin-right: 0; }
.tb.tight::after { margin-left: -2px; margin-right: -2px; }
.view .tight { padding-right: 8px; }
.tb.boxed { background: #fff; padding-right: 3px; }
.tb.on { background: #dbe9f6; border: 1px solid #0078d7; padding: 0 3px; gap: 3px; }
.tb.lone { gap: 0; padding: 0 2px 0 2px; }
.sep { width: 1px; height: 18px; background: #a8a8a8; margin: 0 3px 0 2px; flex: none; }
.sep.tall { height: 24px; }
.grip { width: 2px; height: 16px; margin: 0 2px 0 5px; background: repeating-linear-gradient(#b5b5b5 0 2px, transparent 2px 5px); }

.work { flex: 1; display: flex; gap: 2px; }
.side { width: 179px; display: flex; flex-direction: column; padding: 0 1px 1px 0; font-family: "Liberation Serif", "Noto Sans CJK SC", serif; }
.sidehead { display: flex; align-items: center; height: 16px; margin-bottom: 1px; background: #0a5ce0; color: #fff; gap: 8px; padding: 0 5px 0 1px; }
.sidehead h2 { font: 13px/16px "Noto Sans CJK SC", sans-serif; margin-right: auto; }
.sidehead svg { width: 10px; height: 10px; }
.acc { height: 22px; margin: 0 1px; justify-content: center; background: #f0f0f0; border: 1px solid #a0a0a0; border-top-color: #fff; flex: none; }
.treebox { flex: 1; display: flex; flex-direction: column; margin: 1px; border: 2px solid #a8acb2; border-width: 1px 1px 2px 2px; }
.treetools { display: flex; align-items: center; gap: 6px; height: 26px; padding-left: 5px; background: linear-gradient(#fff, #ececec); border-bottom: 1px solid #82878f; }
.treetools svg { width: 18px; height: 16px; }
.tree { flex: 1; background: #fff; padding-top: 1px; }
.tree button { height: 16px; gap: 4px; padding-right: 4px; }
.tree > li > button { padding-left: 7px; }
.tree .ch { width: 10px; height: 10px; margin-right: 3px; }
.tree .ic { width: 16px; height: 15px; }
.tree ul { margin-left: 12px; border-left: 1px dotted #888; }
.tree ul li { display: flex; align-items: center; margin-left: 18px; border-left: 1px dotted #888; }
.tree ul li::before { content: ""; width: 9px; border-top: 1px dotted #888; }
.tree ul button { padding-left: 3px; }
.tree .sel { background: #d9d9d9; }
.tree .cad { margin-left: -3px; }
.newtag { font: bold 8px/8px "DejaVu Sans", sans-serif; background: #ffd800; align-self: flex-start; margin-left: -2px; }

.main { flex: 1; min-width: 0; display: flex; flex-direction: column; }
.row { display: flex; gap: 2px; }
.r1 { height: 25px; }
.r2 { height: 27px; margin-top: 2px; padding-bottom: 1px; }
.r3 { height: 24px; margin-top: 2px; padding-left: 412px; }
.r4 { height: 28px; margin-top: 2px; }
.r5 { height: 28px; }
.stub { width: 32px; padding-bottom: 2px; }
.combo {
  appearance: none;
  width: 69px;
  height: 22px;
  margin: 0 0 0 3px;
  padding: 0 0 0 1px;
  border: 0;
  border-radius: 0;
  font: inherit;
  color: #000;
  background: url("data:image/svg+xml,%3Csvg xmlns='http://www.w3.org/2000/svg' width='12' height='22'%3E%3Cpath d='M0 0h12v22H0z' fill='%23f3f3f3'/%3E%3Cpath d='M3 10h6l-3 3z'/%3E%3C/svg%3E") right / 12px 22px no-repeat #fff;
}
.combo.first { width: 58px; margin-left: 0; padding-left: 1px; }
.combo.small { width: 55px; margin: 0; }
.combo + .sep { margin-left: 4px; }
.canvas { width: 100%; min-height: 483px; flex: 1; background: #000; overflow: hidden; }
.cadtext { font: 15px "Roboto", sans-serif; fill: #e4e4e4; }
.mid { text-anchor: middle; font-size: 16px; }
.one { fill: #30a0d0; }
.two { fill: #b060c0; }
.four { fill: #4848b8; }
.big { font-size: 23px; fill: #fff; }
.mag { fill: #f0f; }
.ucs { font: 13px "Liberation Sans", sans-serif; }
.gy { fill: #0c0; }
.rx { fill: #b00; }

.status { display: flex; gap: 2px; height: 23px; padding-top: 1px; background: #fff; font-family: "Liberation Serif", "Noto Sans CJK SC", serif; }
.status span { border: 1px solid #d4d4d4; background: linear-gradient(#fff, #f0f0f0); padding: 2px 1px; white-space: nowrap; overflow: hidden; }
.s1 { width: 148px; }
.s2 { width: 78px; }
.s3 { width: 98px; }
.s4 { width: 48px; }
.s5 { flex: 1; }
.s6 { width: 70px; }

.taskbar { display: flex; height: 40px; background: #020c11; color: #fff; }
.start { width: 48px; justify-content: center; }
.start svg { width: 16px; height: 16px; }
.search { width: 344px; background: #333; display: flex; align-items: center; padding: 0 14px 0 8px; gap: 6px; }
.cort { width: 22px; height: 22px; }
.search input { flex: 1; min-width: 0; border: 0; padding: 0; background: none; color: #fff; font: 14px/20px "Noto Sans CJK SC", sans-serif; }
.search input::placeholder { color: #a2a2a2; opacity: 1; }
.mic { width: 12px; height: 18px; }
.apps { display: flex; gap: 1px; }
.apps button { width: 48px; height: 40px; justify-content: center; border-bottom: 2px solid transparent; border-top: 2px solid transparent; }
.apps svg { width: 24px; height: 24px; }
.apps .run { background: linear-gradient(#76b9ff, #76b9ff) center bottom / 40px 2px no-repeat border-box; }
.apps .gap { margin-left: 6px; }
.apps .cur { background: linear-gradient(#76b9ff, #76b9ff) center bottom / 48px 2px no-repeat border-box, #343c40; }
.tray { display: flex; align-items: center; margin-left: auto; gap: 8px; }
.cpu, .clock { text-align: center; line-height: 17px; }
.cpu { margin-right: 12px; }
.clock { line-height: 18px; margin: 0 8px 0 7px; }
.chev { width: 12px; height: 12px; }
.t16 { width: 16px; height: 16px; }
.kbd { width: 24px; height: 14px; }
.ime { font: 14px/20px "Noto Sans CJK SC", sans-serif; }
.sg { width: 16px; height: 16px; margin-left: 6px; }
.note { width: 39px; height: 40px; border-right: 1px solid #667; margin-right: 4px; padding-left: 3px; }
.note svg { width: 24px; height: 24px; font: bold 11px "Open Sans", sans-serif; }

.marks { position: absolute; left: 0; top: 0; width: 100%; height: 100%; pointer-events: none; }
.speed { position: absolute; left: 706px; top: 7px; width: 128px; height: 50px; z-index: 1; }
.ball { position: absolute; left: 0; top: 0; width: 50px; height: 50px; font: 14px "Liberation Sans", sans-serif; filter: drop-shadow(0 1px 2px #888); }
.pill { position: absolute; left: 25px; top: 6px; right: 0; height: 39px; z-index: -1; padding: 4px 0 0 28px; border-radius: 4px 20px 20px 4px; border: 1px solid #bbb; background: linear-gradient(#f0f0f0, #ccc); display: flex; flex-direction: column; font: 10px/15px "Open Sans", sans-serif; box-shadow: 1px 2px 4px #999; }
.pill span { display: flex; gap: 6px; }
.pill i { font: bold 10px/14px "DejaVu Sans", sans-serif; }
.up { color: #e35a3a; }
.dn { color: #2a9a4c; }
.plus { position: absolute; right: 4px; top: 14px; width: 20px; height: 20px; }
.imebar { position: absolute; left: 1000px; top: 3px; width: 174px; height: 24px; display: flex; align-items: center; gap: 6px; padding-left: 21px; background: #fdfeff; border: 1px solid #b9c8da; color: #1b6fc4; font: bold 15px/20px "Noto Sans CJK SC", sans-serif; }
.imebar svg { width: 16px; height: 16px; }
.imebar .slogo { position: absolute; left: -12px; top: -4px; width: 28px; height: 28px; }
```
